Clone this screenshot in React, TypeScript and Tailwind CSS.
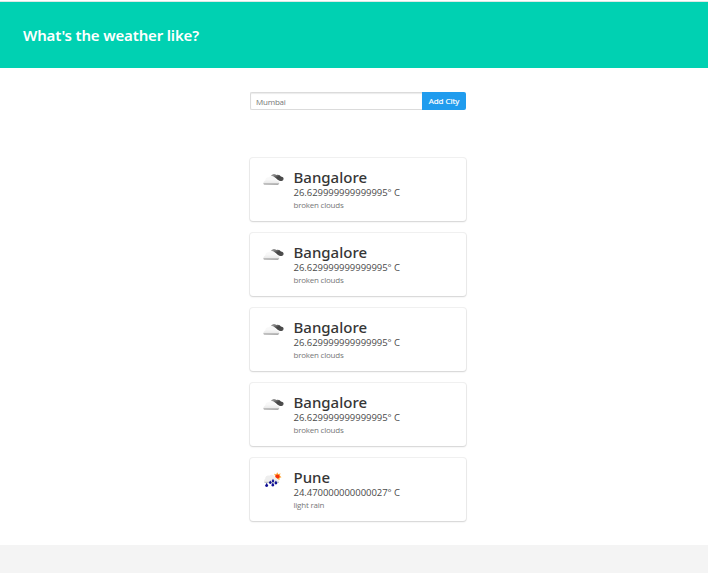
type Weather = { city: string; temp: string; description: string; icon: 'clouds' | 'rain' };

const bangalore: Weather = {
  city: 'Bangalore',
  temp: '26.629999999999995° C',
  description: 'broken clouds',
  icon: 'clouds',
};

const entries: Weather[] = [
  bangalore,
  bangalore,
  bangalore,
  bangalore,
  { city: 'Pune', temp: '24.470000000000027° C', description: 'light rain', icon: 'rain' },
];

function CloudsIcon() {
  return (
    <svg width="24" height="24" viewBox="0 0 24 24" className="block">
      <defs>
        <linearGradient id="cloud" x1="0" y1="0" x2="0" y2="1">
          <stop offset="0.4" stopColor="#f8f8f8" />
          <stop offset="0.75" stopColor="#ececec" />
          <stop offset="1" stopColor="#868686" />
        </linearGradient>
        <linearGradient id="dark" x1="0" y1="0" x2="1" y2="1">
          <stop offset="0" stopColor="#bbb" />
          <stop offset="0.5" stopColor="#444" />
          <stop offset="1" stopColor="#555" />
        </linearGradient>
      </defs>
      <path d="M9 7.8C10.3 5.8 12.8 5.5 14.3 6.9C16.8 6.3 18.3 7.2 18.9 8.6C21.3 8.8 22.3 10.7 21.1 12.2C19.7 13.4 17.8 13.3 17.1 12.5C15.3 12.2 14.8 10.7 13.3 9.8Z" fill="url(#dark)" />
      <path d="M2 16.6C.8 15.8 1.2 13.2 3.2 12.4C3.4 9.8 5.4 8.8 6.9 9.3C8.2 7.2 12 7.6 13 10.2C14.4 10.4 14.9 11.8 14.8 12.6C17.8 12.8 18 16 16 16.7Z" fill="url(#cloud)" />
    </svg>
  );
}

function RainIcon() {
  return (
    <svg width="24" height="24" viewBox="0 0 24 24" className="block">
      <path d="M12 5.8L14.2 6.3L15.2 4.2L16.4 6.2L18.6 5.2L17.8 7.6L19.5 9.2L17.6 10L17.4 12.2L15.5 11L13.5 11.8L13.7 9Z" fill="#ffad42" />
      <circle cx="15.5" cy="8.5" r="2.1" fill="#f5320a" />
      <path d="M3 14.8C1.3 14 1.8 11.8 3.2 10.8C3.3 8.2 5.5 7 7.2 7.8C8.8 5.8 12.3 6.4 13 9.4C15 9.4 15.6 11 15.4 11.8C18 12.3 17.6 14.6 16 14.8Z" fill="#eeeeee" />
      <path d="M2.5 14.3H17" stroke="#b8bdb9" strokeWidth="1" />
      <g fill="#101095">
        <path d="M8.3 12.4L9.7 14.6A1.4 1.4 0 1 1 6.9 14.6Z" />
        <path d="M13.9 12.4L15.3 15A1.4 1.4 0 1 1 12.5 15Z" />
        <path d="M11 10.8L12 12.6A1.1 1.1 0 1 1 10 12.6Z" />
        <path d="M4.7 14.8L6 17.2A1.4 1.4 0 1 1 3.3 17.2Z" />
        <path d="M10.9 14.4L12.2 16.8A1.4 1.4 0 1 1 9.5 16.8Z" />
      </g>
    </svg>
  );
}

function WeatherCard({ city, temp, description, icon }: Weather) {
  return (
    <article className="flex h-[63px] rounded-[3px] bg-white pl-3 pt-[10px] shadow-[0_1px_2px_rgba(10,10,10,0.13),0_0_0_1px_rgba(10,10,10,0.06)]">
      <div className="h-6 w-[31.5px] shrink-0">{icon === 'clouds' ? <CloudsIcon /> : <RainIcon />}</div>
      <div className="whitespace-nowrap text-[#4a4a4a]">
        <h2 className="h-[19px] font-['Noto_Sans',sans-serif] text-[15px] leading-[19px] font-medium text-[#363636]">{city}</h2>
        <p className="h-3 text-[9.5px] leading-3 tracking-[-0.04px]">{temp}</p>
        <p className="h-3 text-[8px] leading-3 tracking-[-0.22px] text-[#777]">{description}</p>
      </div>
    </article>
  );
}

export default function App() {
  return (
    <div className="flex h-[573px] w-[708px] flex-col overflow-hidden bg-white font-['Open_Sans','Noto_Sans',sans-serif]">
      <div className="h-0.5 shrink-0 border-b border-[#dce7e4]" />
      <header className="flex h-[66px] shrink-0 items-center bg-[#00d1b2] pl-[23px]">
        <h1 className="font-['Noto_Sans',sans-serif] text-[15px] leading-5 font-semibold tracking-[-0.16px] whitespace-nowrap text-white">What's the weather like?</h1>
      </header>
      <main className="ml-[250px] w-[216px] grow pt-6">
        <form className="flex h-[18px]">
          <input
            placeholder="Mumbai"
            className="w-[172px] rounded-l-[2px] border border-r-0 border-[#dbdbdb] bg-white px-[5px] pt-0.5 text-[8px] tracking-[-0.2px] shadow-[inset_0_1px_1px_rgba(10,10,10,0.08)] outline-none placeholder:text-[#777]"
          />
          <button type="button" className="w-11 rounded-r-[2px] bg-[#209cee] text-[8px] tracking-[-0.05px] whitespace-nowrap text-white [-webkit-text-stroke:0.2px_white]">
            Add City
          </button>
        </form>
        <section className="mt-12 flex flex-col gap-3">
          {entries.map((entry, index) => (
            <WeatherCard key={index} {...entry} />
          ))}
        </section>
      </main>
      <footer className="h-7 shrink-0 bg-[#f4f4f4]" />
    </div>
  );
}
